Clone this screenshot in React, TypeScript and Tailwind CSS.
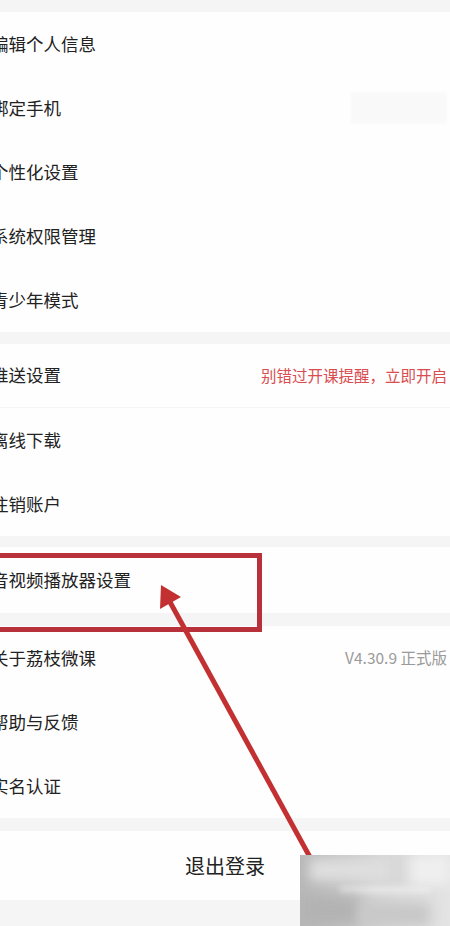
import React from "react";

type Item = { label: string; right?: React.ReactNode; divider?: boolean };

const font = { fontFamily: '"Noto Sans CJK SC", "Noto Sans", sans-serif' };

function Row({ label, right, divider }: Item) {
  return (
    <div
      className={`flex h-[64px] items-center justify-between bg-[#fefefe] pr-[3px] ${
        divider ? "border-b border-[#f5f5f5]" : ""
      }`}
    >
      <span className="-ml-[9px] whitespace-nowrap text-[17.5px] text-[#222222]">{label}</span>
      {right}
    </div>
  );
}

function Section({ items, className = "" }: { items: Item[]; className?: string }) {
  return (
    <div className={`flex flex-col bg-[#fefefe] ${className}`}>
      {items.map((it) => (
        <Row key={it.label} {...it} />
      ))}
    </div>
  );
}

export default function App() {
  return (
    <div className="relative min-h-[926px] w-full overflow-hidden bg-[#f5f5f5]" style={font}>
      <div className="flex flex-col pt-[12px]">
        <Section
          items={[
            { label: "编辑个人信息" },
            {
              label: "绑定手机",
              right: <div className="h-[32px] w-[96px] rounded-sm bg-[#f9f9f9] blur-[1px]" />,
            },
            { label: "个性化设置" },
            { label: "系统权限管理" },
            { label: "青少年模式" },
          ]}
        />
        <Section
          className="mt-[12px]"
          items={[
            {
              label: "推送设置",
              divider: true,
              right: <span className="text-[15.5px] text-[#d94c50]">别错过开课提醒，立即开启</span>,
            },
            { label: "离线下载" },
            { label: "注销账户" },
          ]}
        />
        <div className="mt-[11px] flex h-[66px] items-center bg-[#fefefe]">
          <span className="-ml-[9px] whitespace-nowrap text-[17.5px] text-[#222222]">音视频播放器设置</span>
        </div>
        <Section
          className="mt-[13px]"
          items={[
            {
              label: "关于荔枝微课",
              right: <span className="text-[15.5px] text-[#9a9a9a]">V4.30.9 正式版</span>,
            },
            { label: "帮助与反馈" },
            { label: "实名认证" },
          ]}
        />
        <div className="mt-[13px] flex h-[69px] items-center justify-center bg-[#fefefe]">
          <span className="text-[20px] text-[#222222]">退出登录</span>
        </div>
      </div>

      {/* annotation: red frame */}
      <div className="absolute left-[-12px] top-[553px] h-[79px] w-[274px] border-[5px] border-[#b8313a]" />

      {/* annotation: arrow */}
      <svg className="pointer-events-none absolute left-0 top-0" width="450" height="926" viewBox="0 0 450 926">
        <line x1="170" y1="602" x2="345" y2="921" stroke="#c33032" strokeWidth="5" />
        <polygon points="161,585 181,597 160,609" fill="#c33032" />
      </svg>

      {/* blurred watermark */}
      <div className="absolute bottom-0 right-0 h-[71px] w-[150px] overflow-hidden bg-gradient-to-r from-[#b8b8b8] via-[#d4d4d4] to-[#e4e4e4]">
        <div className="absolute left-[10px] top-[4px] h-[22px] w-[80px] bg-[#dedede] blur-[6px]" />
        <div className="absolute left-[40px] top-[32px] h-[6px] w-[90px] bg-[#ececec] blur-[3px]" />
        <div className="absolute left-[0px] top-[40px] h-[31px] w-[60px] bg-[#b2b2b2] blur-[8px]" />
        <div className="absolute right-[0px] top-[0px] h-[30px] w-[40px] bg-[#efefef] blur-[6px]" />
        <div className="absolute left-[60px] top-[48px] h-[23px] w-[70px] bg-[#c8c8c8] blur-[6px]" />
      </div>
    </div>
  );
}
